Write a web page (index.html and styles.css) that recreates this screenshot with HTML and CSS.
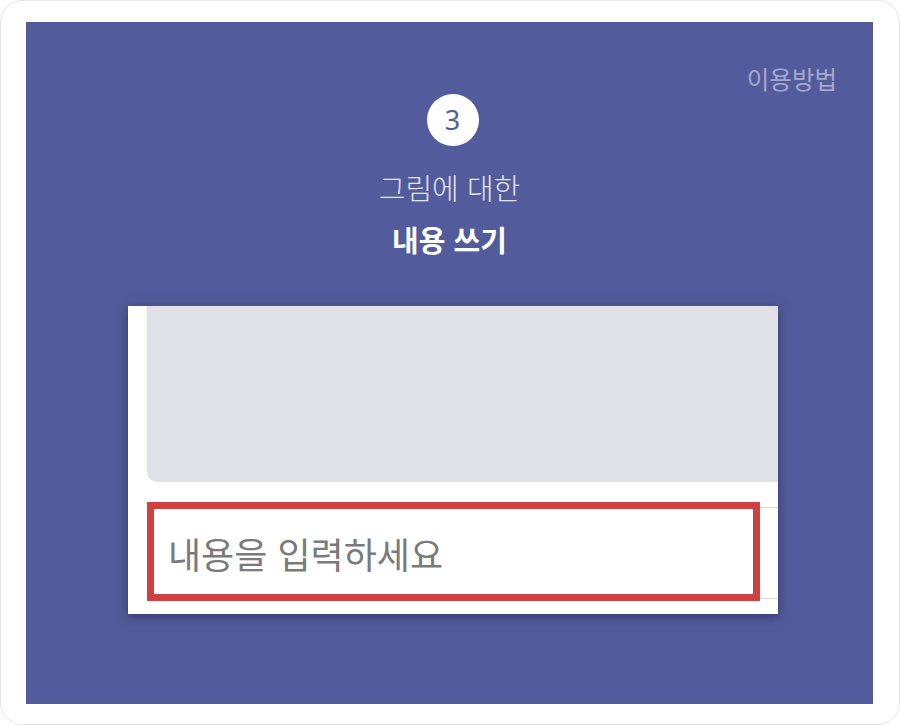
FILE: index.html
```html
<!DOCTYPE html>
<html lang="ko">
<head>
<meta charset="utf-8">
<title>이용방법</title>
<link rel="stylesheet" href="styles.css">
</head>
<body>
<div class="frame">
  <div class="panel">
    <div class="top">
      <span class="help">이용방법</span>
    </div>
    <div class="step">3</div>
    <p class="subtitle">그림에 대한</p>
    <p class="title">내용 쓰기</p>
    <div class="shot">
      <div class="picture"></div>
      <div class="field">
        <span class="placeholder">내용을 입력하세요</span>
        <div class="mark"></div>
      </div>
    </div>
  </div>
</div>
</body>
</html>
```

FILE: styles.css
```css
* { box-sizing: border-box; }
html, body {
  margin: 0;
  padding: 0;
  background: #ffffff;
}
body {
  font-family: "Noto Sans CJK KR", "Noto Sans", sans-serif;
}
.frame {
  width: 900px;
  height: 725px;
  border: 1px solid #e6e6e6;
  border-radius: 22px;
  padding: 21px 26px 20px 25px;
  background: #ffffff;
}
.panel {
  height: 100%;
  background: #525b9b;
  display: flex;
  flex-direction: column;
  align-items: center;
  padding-top: 41px;
}
.top {
  align-self: stretch;
  display: flex;
  justify-content: flex-end;
  padding-right: 36px;
  height: 31px;
}
.help {
  font-size: 24.5px;
  line-height: 32px;
  color: #a4a8cf;
}
.step {
  width: 52px;
  height: 52px;
  border-radius: 50%;
  background: #ffffff;
  color: #525b9b;
  font-family: "Noto Sans", sans-serif;
  font-size: 27px;
  line-height: 52px;
  text-align: center;
  margin-left: 6px;
}
.subtitle {
  margin: 21px 0 0;
  font-size: 29px;
  line-height: 40px;
  font-weight: 300;
  color: #e2e4f1;
}
.title {
  margin: 12px 0 0;
  font-size: 29px;
  line-height: 40px;
  font-weight: 700;
  color: #ffffff;
}
.shot {
  margin-top: 47px;
  margin-left: 7px;
  width: 650px;
  height: 308px;
  background: #ffffff;
  box-shadow: 0 3px 10px rgba(20, 24, 70, 0.5);
  padding-left: 19px;
  overflow: hidden;
}
.picture {
  height: 176px;
  background: #e0e1e6;
  border-bottom-left-radius: 10px;
}
.field {
  position: relative;
  margin-top: 25px;
  height: 92px;
  border-top: 1px solid #d8d8d8;
  border-bottom: 1px solid #d8d8d8;
  display: flex;
  align-items: center;
  padding-left: 21px;
}
.placeholder {
  font-size: 36px;
  color: #7a7a7a;
  line-height: 1;
}
.mark {
  position: absolute;
  left: 0;
  top: -6px;
  width: 613px;
  height: 99px;
  border: 7px solid #cf4141;
}
```
